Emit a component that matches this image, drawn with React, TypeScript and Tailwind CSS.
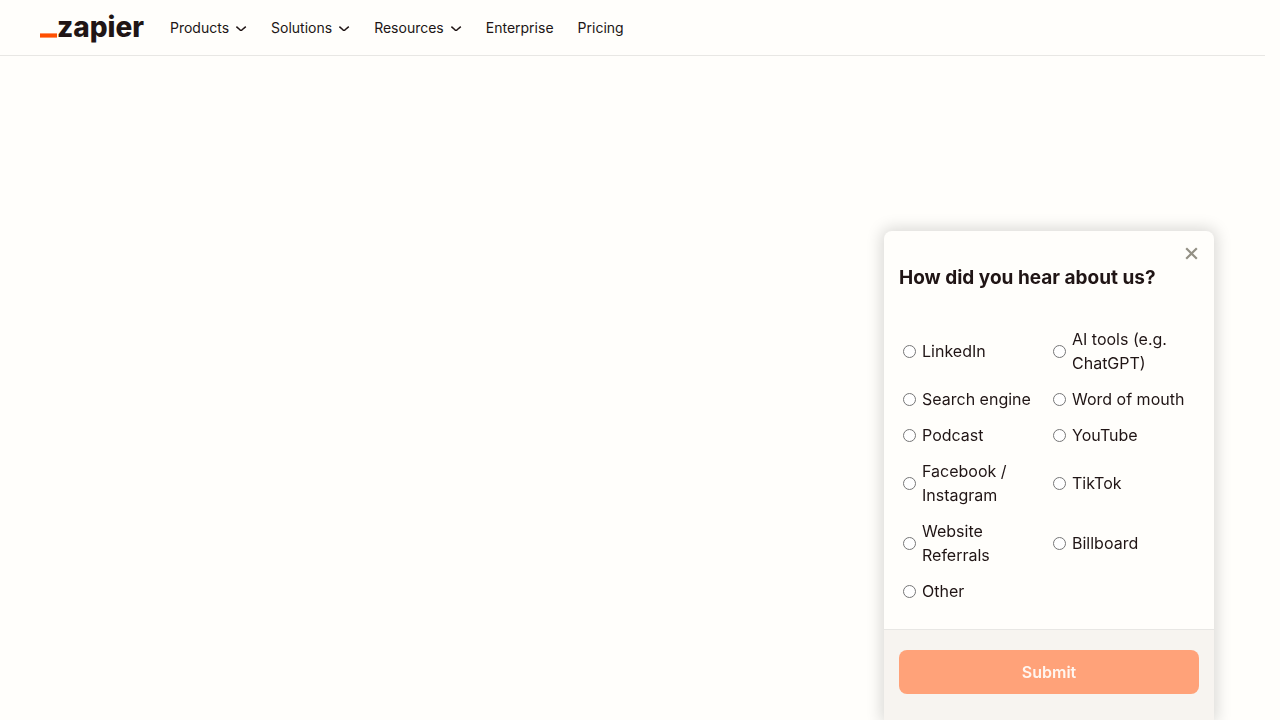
import { useState } from "react";

const links = [
  { label: "Products", menu: true },
  { label: "Solutions", menu: true },
  { label: "Resources", menu: true },
  { label: "Enterprise", menu: false },
  { label: "Pricing", menu: false },
];

const sources = [
  "LinkedIn",
  "AI tools (e.g. ChatGPT)",
  "Search engine",
  "Word of mouth",
  "Podcast",
  "YouTube",
  "Facebook / Instagram",
  "TikTok",
  "Website Referrals",
  "Billboard",
  "Other",
];

function Chevron() {
  return (
    <svg viewBox="0 0 12 12" className="mt-px size-3" fill="none" stroke="currentColor" strokeWidth="1.5" strokeLinejoin="round" aria-hidden="true">
      <path d="M1.4 4.6 4.9 7.8Q6 8.7 7.1 7.8L10.8 4.6" />
    </svg>
  );
}

function Logo() {
  return (
    <a href="#" className="flex h-8 w-[106px] items-end pb-px text-[28px] leading-8 font-extrabold">
      <svg viewBox="0 0 17 5" className="mb-[5px] h-[5px] w-[17px] shrink-0" aria-hidden="true">
        <rect y="0.4" width="17" height="4.2" fill="#ff4f00" />
      </svg>
      zapier
    </a>
  );
}

function Header() {
  return (
    <header className="flex h-14 items-center gap-6 border-b border-[#e8e7e4] px-10">
      <Logo />
      <nav className="flex items-center gap-6 text-sm">
        {links.map(({ label, menu }) =>
          menu ? (
            <button key={label} type="button" className="flex items-center gap-[6px]">
              {label}
              <Chevron />
            </button>
          ) : (
            <a key={label} href="#">
              {label}
            </a>
          ),
        )}
      </nav>
    </header>
  );
}

function Survey({ onClose }: { onClose: () => void }) {
  const [choice, setChoice] = useState("");
  return (
    <form
      onSubmit={(e) => e.preventDefault()}
      className="fixed right-[66px] bottom-0 w-[330px] rounded-t-lg bg-[#fffefb] shadow-[0_0_15px_3px_rgba(0,0,0,0.15)]"
    >
      <div className="flex justify-end px-4 pt-4">
        <button type="button" aria-label="Close" onClick={onClose} className="text-[#939084]">
          <svg viewBox="0 0 14 14" className="size-[14px]" fill="none" stroke="currentColor" strokeWidth="2.2" aria-hidden="true">
            <path d="m2.2 1.2 10.6 10.6M12.8 1.2 2.2 11.8" />
          </svg>
        </button>
      </div>
      <fieldset className="px-[15px] pb-[26px]">
        <legend className="mb-9 pt-1 text-[19px] leading-[26px] font-bold">How did you hear about us?</legend>
        <div className="grid grid-cols-2 gap-y-3">
          {sources.map((source) => (
            <label key={source} className="flex items-center gap-[6px] pl-1">
              <input
                type="radio"
                name="source"
                value={source}
                checked={choice === source}
                onChange={() => setChoice(source)}
                className="size-[13px] shrink-0"
              />
              {source}
            </label>
          ))}
        </div>
      </fieldset>
      <div className="border-t border-[#e8e7e4] bg-[#f7f4f0] px-[15px] pt-5 pb-[26px]">
        <button type="submit" className="h-11 w-full rounded-lg bg-[#ffa279] font-semibold text-[#fff6f0]">
          Submit
        </button>
      </div>
    </form>
  );
}

export default function App() {
  const [open, setOpen] = useState(true);
  return (
    <div className="min-h-screen bg-[#fffefb] pr-[15px] font-['Inter',sans-serif] text-[#201515]">
      <Header />
      {open && <Survey onClose={() => setOpen(false)} />}
    </div>
  );
}
